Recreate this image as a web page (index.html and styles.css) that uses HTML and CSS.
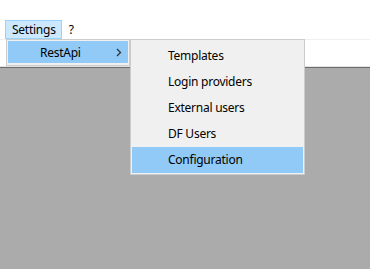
FILE: index.html
```html
<!DOCTYPE html>
<html>
<head>
<meta charset="utf-8">
<link rel="stylesheet" href="styles.css">
</head>
<body>
<div class="window">
  <div class="top-space"></div>
  <div class="menubar">
    <div class="mb-item active">Settings</div>
    <div class="mb-item">?</div>
  </div>
  <div class="toolstrip"></div>
  <div class="mdi"></div>

  <div class="dropdown">
    <div class="dd-item selected">
      <span class="dd-label">RestApi</span>
      <svg class="chev" width="6" height="9" viewBox="0 0 6 9"><path d="M1 1 L4.5 4.5 L1 8" fill="none" stroke="#333" stroke-width="1.3"/></svg>
    </div>
  </div>

  <div class="submenu">
    <div class="sm-item">Templates</div>
    <div class="sm-item">Login providers</div>
    <div class="sm-item">External users</div>
    <div class="sm-item">DF Users</div>
    <div class="sm-item selected">Configuration</div>
  </div>
</div>
</body>
</html>
```
FILE: styles.css
```css
* { box-sizing: border-box; }
html, body { margin: 0; padding: 0; }
body {
  background: #ffffff;
  font-family: "Noto Sans", "Open Sans", sans-serif;
  font-size: 12px;
  letter-spacing: -0.25px;
  color: #000;
}
.window {
  position: relative;
  width: 370px;
  height: 269px;
  display: flex;
  flex-direction: column;
  overflow: hidden;
}
.top-space { height: 20px; background: #fff; }
.menubar {
  display: flex;
  height: 20px;
  padding-left: 5px;
  border-bottom: 1px solid #f0f0f0;
  background: #fff;
}
.mb-item {
  height: 19px;
  line-height: 17px;
  padding: 0 5px 0 6px;
  border: 1px solid transparent;
}
.mb-item.active {
  background: #cce8ff;
  border-color: #99d1ff;
}
.toolstrip {
  height: 27px;
  background: #fff;
  border-bottom: 1px solid #e3e3e3;
}
.mdi {
  flex: 1;
  background: #ababab;
  border-top: 1px solid #6d6d6d;
}
.dropdown {
  position: absolute;
  left: 6px;
  top: 39px;
  width: 124px;
  height: 27px;
  background: #f0f0f0;
  border: 1px solid #cccccc;
  padding: 1px 1px 2px 1px;
}
.dd-item {
  display: flex;
  align-items: center;
  height: 22px;
  padding-left: 32px;
  padding-right: 6px;
}
.dd-item.selected { background: #91c9f7; }
.dd-label { flex: 1; }
.chev { display: block; }
.submenu {
  position: absolute;
  left: 130px;
  top: 39px;
  width: 175px;
  background: #f0f0f0;
  border: 1px solid #cccccc;
  padding: 3px 1px 1px 1px;
}
.sm-item {
  height: 26px;
  line-height: 26px;
  padding-left: 36px;
}
.sm-item.selected { background: #91c9f7; }
```
